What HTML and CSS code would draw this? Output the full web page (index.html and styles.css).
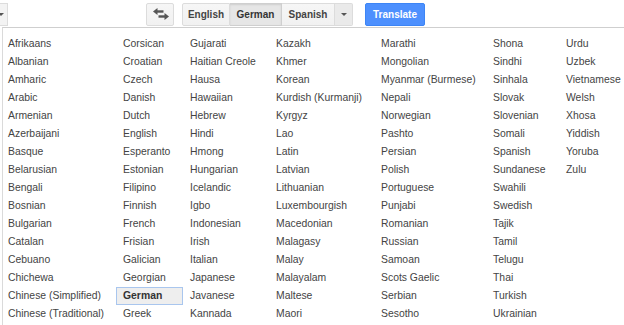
FILE: index.html
```html
<!DOCTYPE html>
<html lang="en">
<head>
    <meta charset="UTF-8">
    <title>Translate - language picker</title>
    <link rel="stylesheet" href="styles.css">
</head>
<body>

    <div class="toolbar">
        <div class="lang-more lang-more-cut"><span class="caret"></span></div>

        <button class="tool-btn swap" title="Swap languages">
            <svg width="16" height="12" viewBox="0 0 16 12">
                <polygon points="0,3.5 4.5,0 4.5,7" fill="#555"/>
                <rect x="4" y="2.3" width="6.5" height="2.4" fill="#555"/>
                <polygon points="16,8.5 11.5,5 11.5,12" fill="#555"/>
                <rect x="5.5" y="7.3" width="6.5" height="2.4" fill="#555"/>
            </svg>
        </button>

        <div class="lang-group">
            <button class="lang-btn">English</button>
            <button class="lang-btn selected">German</button>
            <button class="lang-btn">Spanish</button>
            <button class="lang-btn more"><span class="caret"></span></button>
        </div>

        <button class="translate-btn">Translate</button>
    </div>

    <div class="picker">
        <div class="lang-list" id="langList"></div>
    </div>

    <script>
    document.addEventListener('DOMContentLoaded', function () {
        const list = document.getElementById('langList');

        const languages = [
            'Afrikaans', 'Albanian', 'Amharic', 'Arabic', 'Armenian', 'Azerbaijani',
            'Basque', 'Belarusian', 'Bengali', 'Bosnian', 'Bulgarian', 'Catalan',
            'Cebuano', 'Chichewa', 'Chinese (Simplified)', 'Chinese (Traditional)',
            'Corsican', 'Croatian', 'Czech', 'Danish', 'Dutch', 'English', 'Esperanto',
            'Estonian', 'Filipino', 'Finnish', 'French', 'Frisian', 'Galician',
            'Georgian', 'German', 'Greek',
            'Gujarati', 'Haitian Creole', 'Hausa', 'Hawaiian', 'Hebrew', 'Hindi',
            'Hmong', 'Hungarian', 'Icelandic', 'Igbo', 'Indonesian', 'Irish',
            'Italian', 'Japanese', 'Javanese', 'Kannada',
            'Kazakh', 'Khmer', 'Korean', 'Kurdish (Kurmanji)', 'Kyrgyz', 'Lao',
            'Latin', 'Latvian', 'Lithuanian', 'Luxembourgish', 'Macedonian',
            'Malagasy', 'Malay', 'Malayalam', 'Maltese', 'Maori',
            'Marathi', 'Mongolian', 'Myanmar (Burmese)', 'Nepali', 'Norwegian',
            'Pashto', 'Persian', 'Polish', 'Portuguese', 'Punjabi', 'Romanian',
            'Russian', 'Samoan', 'Scots Gaelic', 'Serbian', 'Sesotho',
            'Shona', 'Sindhi', 'Sinhala', 'Slovak', 'Slovenian', 'Somali', 'Spanish',
            'Sundanese', 'Swahili', 'Swedish', 'Tajik', 'Tamil', 'Telugu', 'Thai',
            'Turkish', 'Ukrainian',
            'Urdu', 'Uzbek', 'Vietnamese', 'Welsh', 'Xhosa', 'Yiddish', 'Yoruba', 'Zulu'
        ];

        const selected = 'German';

        // Build the list, the grid flows it into columns of 16
        languages.forEach(function (name) {
            const item = document.createElement('div');
            item.className = 'lang-item';
            if (name === selected) {
                item.classList.add('active');
            }
            item.textContent = name;
            list.appendChild(item);
        });
    });
    </script>

</body>
</html>
```

FILE: styles.css
```css
body {
    margin: 0;
    background: #fff;
    font-family: "Liberation Sans", Arial, sans-serif;
    color: #444;
    overflow: hidden;
}

.toolbar {
    display: flex;
    align-items: center;
    height: 27px;
}

button {
    font-family: inherit;
    cursor: pointer;
}

.caret {
    display: inline-block;
    width: 0;
    height: 0;
    border-left: 3px solid transparent;
    border-right: 3px solid transparent;
    border-top: 3px solid #555;
}

/* the dropdown button cut off by the left edge */
.lang-more-cut {
    box-sizing: border-box;
    width: 8px;
    height: 23px;
    margin-top: 1px;
    border: 1px solid #dcdcdc;
    border-left: none;
    background: #f3f3f3;
    display: flex;
    align-items: center;
    overflow: hidden;
}

.lang-more-cut .caret {
    margin-left: -2px;
}

.tool-btn {
    box-sizing: border-box;
    height: 23px;
    margin-top: 1px;
    border: 1px solid #dcdcdc;
    border-radius: 2px;
    background: linear-gradient(#f6f6f6, #f1f1f1);
    padding: 0;
}

.swap {
    width: 28px;
    margin-left: 138px;
    display: flex;
    align-items: center;
    justify-content: center;
}

.swap svg {
    margin-left: 1px;
}

.lang-group {
    display: flex;
    margin-left: 8px;
    margin-top: 1px;
    height: 23px;
}

.lang-btn {
    box-sizing: border-box;
    height: 23px;
    border: 1px solid #dcdcdc;
    border-left: none;
    background: linear-gradient(#f6f6f6, #f1f1f1);
    font-size: 10px;
    font-weight: bold;
    color: #444;
    padding: 0;
}

.lang-btn:first-child {
    border-left: 1px solid #dcdcdc;
    border-radius: 2px 0 0 2px;
    width: 48px;
}

.lang-btn:nth-child(2) {
    width: 52px;
}

.lang-btn:nth-child(3) {
    width: 53px;
}

.lang-btn.selected {
    background: #e6e6e6;
    border-color: #cfcfcf;
    box-shadow: inset 0 1px 2px rgba(0, 0, 0, 0.1);
    color: #333;
}

.lang-btn.more {
    width: 18px;
    border-radius: 0 2px 2px 0;
    background: #eaeaea;
    display: flex;
    align-items: center;
    justify-content: center;
}

.translate-btn {
    box-sizing: border-box;
    width: 60px;
    height: 23px;
    margin-left: 12px;
    margin-top: 1px;
    border: 1px solid #3d85f5;
    border-radius: 2px;
    background: #4d90fe;
    color: #fff;
    font-size: 10px;
    font-weight: bold;
    padding: 0;
}

.picker {
    margin-left: 2px;
    border-top: 1px solid #cfcfcf;
    border-left: 1px solid #dadada;
    padding-top: 7px;
    height: 300px;
}

.lang-list {
    display: grid;
    grid-auto-flow: column;
    grid-template-rows: repeat(16, 18px);
    grid-template-columns: 115px 67px 86px 105px 112px 73px auto;
    margin-left: -2px;
}

.lang-item {
    box-sizing: border-box;
    height: 18px;
    line-height: 16px;
    border: 1px solid transparent;
    padding-left: 6px;
    font-size: 10.4px;
    color: #444;
    white-space: nowrap;
    cursor: pointer;
}

.lang-item.active {
    background: #eeeeee;
    border-color: #a9c6ee;
    font-weight: bold;
    color: #333;
}
```
